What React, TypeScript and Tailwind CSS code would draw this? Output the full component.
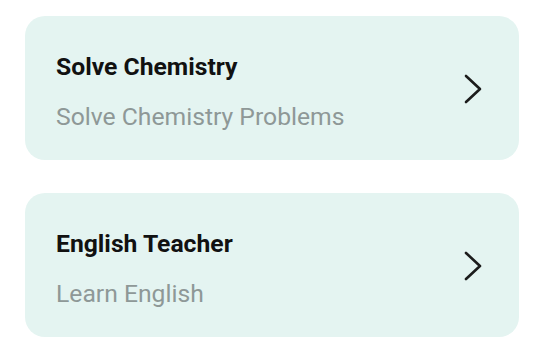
const items = [
    { title: 'Solve Chemistry', subtitle: 'Solve Chemistry Problems' },
    { title: 'English Teacher', subtitle: 'Learn English' },
];

const Chevron = () => (
    <svg width="22" height="32" viewBox="0 0 22 32" fill="none" className="text-[#1c1c1c]">
        <polyline
            points="4,3 18,16 4,29"
            stroke="currentColor"
            strokeWidth="2.6"
            strokeLinecap="round"
            strokeLinejoin="round"
        />
    </svg>
);

const App = () => {
    return (
        <div
            className="w-[550px] h-[355px] bg-white pt-4 pl-[25px] pr-[31px] flex flex-col gap-[33px]"
            style={{ fontFamily: 'Roboto, "Noto Sans", sans-serif' }}
        >
            {items.map((item) => (
                <div
                    key={item.title}
                    className="h-[144px] rounded-[20px] bg-[#e4f4f1] pl-[31px] pr-[35px] pt-[36px] flex justify-between"
                >
                    <div className="flex flex-col">
                        <p className="text-[24.7px] leading-[29px] font-bold text-[#111111]">
                            {item.title}
                        </p>
                        <p className="mt-[21px] text-[24.7px] leading-[29px] text-[#8e9897]">
                            {item.subtitle}
                        </p>
                    </div>
                    <div className="pt-[21px]">
                        <Chevron />
                    </div>
                </div>
            ))}
        </div>
    );
};

export default App;
